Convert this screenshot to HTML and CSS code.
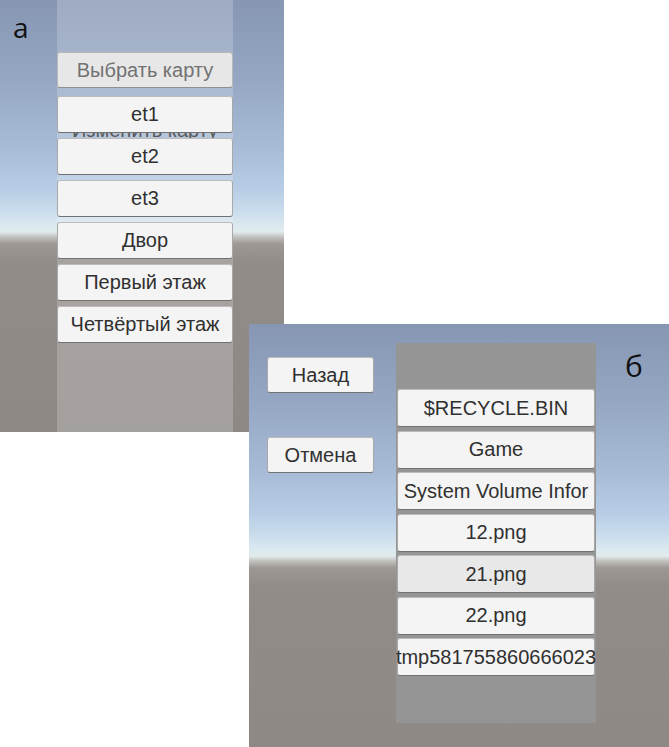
FILE: index.html
```html
<!DOCTYPE html>
<html lang="ru">
<head>
<meta charset="utf-8">
<title>Выбор карты</title>
<link rel="stylesheet" href="styles.css">
</head>
<body>
<div class="canvas">
  <section class="shot shot-a">
    <span class="tag tag-a">а</span>
    <div class="menu-a">
      <div class="btn btn-disabled btn-first">Выбрать карту</div>
      <div class="btn btn-a btn-et1">et1</div>
      <div class="hidden-label"><span>Изменить карту</span></div>
      <div class="btn btn-a">et2</div>
      <div class="btn btn-a">et3</div>
      <div class="btn btn-a">Двор</div>
      <div class="btn btn-a">Первый этаж</div>
      <div class="btn btn-a">Четвёртый этаж</div>
    </div>
  </section>
  <section class="shot shot-b">
    <span class="tag tag-b">б</span>
    <div class="side-b">
      <div class="btn btn-side">Назад</div>
      <div class="btn btn-side">Отмена</div>
    </div>
    <div class="list-b">
      <div class="btn btn-b">$RECYCLE.BIN</div>
      <div class="btn btn-b">Game</div>
      <div class="btn btn-b">System Volume Infor</div>
      <div class="btn btn-b">12.png</div>
      <div class="btn btn-b btn-hover">21.png</div>
      <div class="btn btn-b">22.png</div>
      <div class="btn btn-b">tmp581755860666023</div>
    </div>
  </section>
</div>
</body>
</html>
```

FILE: styles.css
```css
html, body {
  margin: 0;
  padding: 0;
  background: #ffffff;
}

.canvas {
  width: 669px;
  height: 747px;
  display: grid;
  overflow: hidden;
  font-family: "Liberation Sans", Arial, sans-serif;
}

.shot {
  grid-area: 1 / 1;
  position: relative;
  display: flex;
  align-items: flex-start;
  background: linear-gradient(to bottom,
    #8797b3 0px,
    #95a7c3 80px,
    #a8bcd7 150px,
    #b8cde5 190px,
    #c9dcec 210px,
    #d9e7ef 224px,
    #e1ebec 232px,
    #c2c1be 237px,
    #9d9894 244px,
    #928c88 262px,
    #8e8985 100%);
}

.shot-a {
  width: 284px;
  height: 432px;
}

.shot-b {
  width: 420px;
  height: 423px;
  margin-left: 249px;
  margin-top: 324px;
}

.tag {
  position: absolute;
  font-family: "Open Sans", "DejaVu Sans", sans-serif;
  color: #111111;
  line-height: 1;
}

.tag-a {
  left: 13px;
  top: 13px;
  font-size: 28px;
}

.tag-b {
  left: 376px;
  top: 27px;
  font-size: 30px;
}

.btn {
  box-sizing: border-box;
  display: flex;
  align-items: center;
  justify-content: center;
  white-space: nowrap;
  font-size: 20px;
  color: #303030;
  background: #f4f4f4;
  border: 1px solid #a8a8a8;
  border-top-color: #bcbcbc;
  border-bottom-color: #727272;
  border-radius: 3px;
}

/* panel a */
.menu-a {
  margin-left: 57px;
  width: 176px;
  height: 432px;
  box-sizing: border-box;
  padding-top: 52px;
  display: flex;
  flex-direction: column;
  gap: 5px;
  background: rgba(255, 255, 255, 0.2);
}

.btn-a {
  height: 37px;
  flex: none;
}

.btn-first {
  height: 36px;
  margin-bottom: 3px;
  flex: none;
}

.btn-disabled {
  background: #e7e7e7;
  color: #727272;
  border-color: #b8b8b8;
  border-bottom-color: #909090;
}

.btn-et1 {
  margin-bottom: -5px;
}

.hidden-label {
  height: 5px;
  flex: none;
  margin-bottom: -5px;
  overflow: hidden;
  display: flex;
  align-items: flex-end;
  justify-content: center;
  font-size: 20px;
  color: #5a5a5a;
}

.hidden-label span {
  line-height: 20px;
  margin-bottom: -2px;
  white-space: nowrap;
}

/* panel b */
.side-b {
  margin-left: 18px;
  margin-top: 33px;
  width: 107px;
  display: flex;
  flex-direction: column;
  gap: 44px;
}

.btn-side {
  height: 36px;
}

.list-b {
  margin-left: 22px;
  margin-top: 19px;
  width: 200px;
  height: 380px;
  box-sizing: border-box;
  padding: 46px 1px 0;
  display: flex;
  flex-direction: column;
  gap: 3.5px;
  background: #959595;
}

.btn-b {
  height: 38px;
  flex: none;
  overflow: visible;
}

.btn-hover {
  background: #e8e8e8;
}
```
